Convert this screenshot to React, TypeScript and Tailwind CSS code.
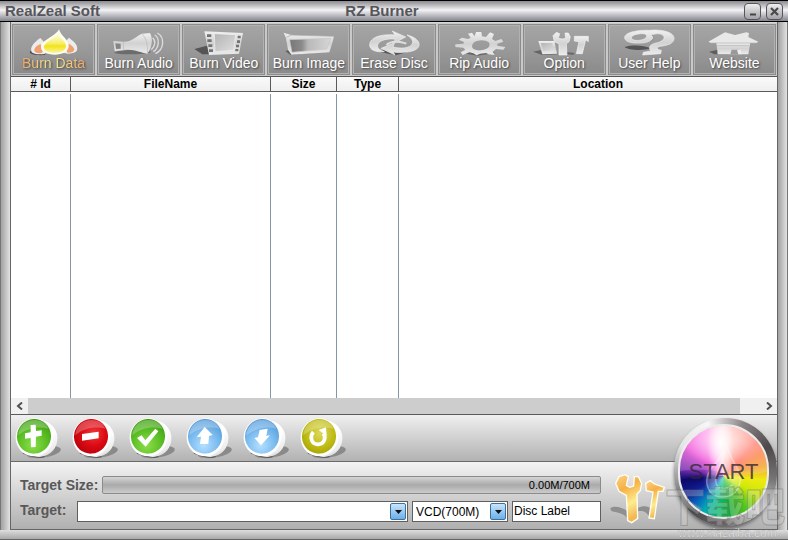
import { useState } from "react";
import type { ReactNode } from "react";

const COLUMNS = [
  { label: "# Id", width: "w-[60px]" },
  { label: "FileName", width: "w-[200px]" },
  { label: "Size", width: "w-[66px]" },
  { label: "Type", width: "w-[62px]" },
  { label: "Location", width: "" },
];

const TOOLS: { label: string; icon: ReactNode }[] = [
  {
    label: "Burn Data",
    icon: (
      <>
        <path d="M4 66 C-4 76 20 80 50 78 L30 56 Z" fill="#4f4f4f" />
        <path d="M8 70 C2 56 12 42 34 27 C50 42 56 58 48 74 C34 78 14 76 8 70 Z" fill="#ececec" />
        <path d="M16 66 C15 56 26 48 35 46 C42 56 44 66 38 72 C28 74 20 72 16 66 Z" fill="#f0a070" />
        <path d="M144 64 C148 50 138 40 120 26 C106 40 98 58 106 72 C118 76 140 74 144 64 Z" fill="#ececec" />
        <path d="M136 63 C136 56 128 48 119 44 C112 54 110 64 116 71 C126 72 134 68 136 63 Z" fill="#f0a070" />
        <path d="M90 1 C96 22 120 32 119 52 C118 70 98 77 78 77 C54 77 36 68 36 54 C38 32 78 24 90 1 Z" fill="#fffdf0" />
        <path d="M88 12 C92 30 112 36 111 52 C110 66 94 72 78 72 C60 72 44 65 44 54 C48 36 76 30 88 12 Z" fill="url(#flame)" />
      </>
    ),
  },
  {
    label: "Burn Audio",
    icon: (
      <>
        <path d="M0 72 C20 60 70 62 112 68 C96 78 20 78 0 72 Z" fill="#6c6c6c" />
        <path d="M-2 36 L28 38 C50 40 66 22 84 14 L108 12 C118 30 114 56 100 74 C78 72 58 58 28 64 L2 66 Z" fill="url(#metal)" />
        <path d="M4 43 L20 44 L20 59 L6 60 Z" fill="#858585" />
        <path d="M28 38 L29 64 M84 14 C98 30 102 50 100 74" fill="none" stroke="#b6b6b6" strokeWidth="2" />
        <path d="M116 26 C126 34 124 52 112 62 M122 18 C138 28 136 56 118 68 M130 12 C154 26 150 62 124 74" fill="none" stroke="#dcdcdc" strokeWidth="4" />
      </>
    ),
  },
  {
    label: "Burn Video",
    icon: (
      <>
        <path d="M-14 60 L24 50 L46 76 L10 76 Z" fill="#555" />
        <path d="M16 7 L132 12 L120 74 L30 78 Z" fill="url(#metal)" />
        <path d="M46 14 L110 17 L104 64 L48 68 Z" fill="url(#dim)" stroke="#f2f2f2" strokeWidth="2" />
        <path d="M24 16h13v8h-13z M25 31h13v8h-13z M28 46h12v8h-12z M30 61h12v8h-12z M116 20h9v8h-9z M114 34h9v8h-9z M111 47h9v8h-9z M109 60h9v7h-9z" fill="#737373" />
      </>
    ),
  },
  {
    label: "Burn Image",
    icon: (
      <>
        <path d="M4 66 C20 60 60 70 86 72 L20 78 Z" fill="#5c5c5c" />
        <path d="M-1 11 L22 18 L150 22 L146 38 L136 70 L22 77 L12 62 L6 28 Z" fill="url(#metal)" />
        <path d="M17 32 L140 28 L128 60 L24 70 Z" fill="url(#frame)" stroke="#c6c6c6" strokeWidth="2" />
        <path d="M7 25 L22 18 L150 22" fill="none" stroke="#aaa" strokeWidth="2" />
      </>
    ),
  },
  {
    label: "Erase Disc",
    icon: (
      <>
        <path d="M30 68 C60 56 90 58 112 70 L80 79 Z" fill="#555" />
        <path d="M2 48 C2 26 34 14 78 18 L70 6 L110 24 L76 42 L78 30 C48 28 28 36 26 48 C24 58 34 64 46 68 C22 70 2 64 2 48 Z" fill="url(#metal)" stroke="#f0f0f0" strokeWidth="2" />
        <path d="M114 18 C156 28 164 58 126 67 C108 71 84 72 72 68 L78 78 L36 58 L76 42 L72 54 C94 60 124 58 130 44 C134 34 126 26 114 18 Z" fill="url(#metal)" stroke="#f0f0f0" strokeWidth="2" />
        <path d="M52 48 C66 36 92 36 112 44" fill="none" stroke="#dedede" strokeWidth="6" />
      </>
    ),
  },
  {
    label: "Rip Audio",
    icon: (
      <>
        <path d="M24 72 C60 60 100 64 124 72 L70 80 Z" fill="#666" />
        <path
          fillRule="evenodd"
          d="M62 22 L66 9 L82 9 L84 22 L96 24 L108 10 L120 15 L114 30 L124 36 L142 30 L148 38 L130 44 L130 50 L154 54 L148 62 L126 60 L116 68 L122 78 L104 76 L96 72 L78 74 L68 79 L58 73 L46 70 L26 78 L20 70 L34 62 L28 56 L4 54 L4 46 L28 44 L30 39 L14 32 L24 26 L42 30 L50 26 L42 14 L54 11 Z M58 42 C48 56 58 64 78 64 C102 63 112 50 104 40 C94 31 68 32 58 42 Z"
          fill="url(#metal)"
        />
      </>
    ),
  },
  {
    label: "Option",
    icon: (
      <>
        <path d="M-18 68 L20 60 L58 76 L10 78 Z M74 68 L106 72 L104 77 L84 76 Z" fill="#666" />
        <path d="M-2 36 L46 36 L54 74 L10 76 Z" fill="url(#metal)" />
        <path d="M5 42 L40 42 L45 64 L13 65 Z" fill="url(#dim)" />
        <path d="M42 20 L52 10 L62 14 L58 28 L70 30 L80 28 L78 12 L88 12 L94 24 L90 38 L82 44 L84 78 L60 78 L60 44 L46 38 Z" fill="url(#metal)" stroke="#f3f3f3" strokeWidth="2" />
        <path d="M106 22 L148 22 L148 38 L140 32 L130 74 L112 74 L120 38 L106 36 Z" fill="url(#metal)" stroke="#f3f3f3" strokeWidth="2" />
      </>
    ),
  },
  {
    label: "User Help",
    icon: (
      <>
        <path d="M2 54 C30 46 60 50 82 58 C58 66 12 64 2 54 Z" fill="#555" />
        <path
          fillRule="evenodd"
          d="M78 4 C120 0 152 12 150 30 C148 46 124 50 108 52 C94 56 100 62 112 64 L110 74 L56 78 L58 70 L80 66 C72 52 80 46 96 42 C118 38 126 26 116 18 C108 12 92 14 84 18 C92 28 78 42 48 42 C18 44 0 36 2 24 C4 12 34 2 78 4 Z M58 14 C30 14 18 22 24 30 C32 38 60 34 66 26 C70 20 68 15 58 14 Z"
          fill="url(#metal)"
          stroke="#ededed"
          strokeWidth="2"
        />
        <path d="M84 18 C94 24 92 34 80 38" fill="none" stroke="#9a9a9a" strokeWidth="4" />
      </>
    ),
  },
  {
    label: "Website",
    icon: (
      <>
        <path d="M0 68 L26 62 L60 76 L16 76 Z" fill="#5e5e5e" />
        <path d="M22 40 L124 40 L118 76 L26 76 Z" fill="url(#metal)" />
        <path d="M-2 38 L48 10 L78 18 L112 10 L120 12 L118 24 L148 38 L142 42 L6 42 Z" fill="#e8e8e8" />
        <path d="M6 42 L142 42 M22 50 L120 50" stroke="#b3b3b3" strokeWidth="2" />
        <path d="M68 62 L88 62 L92 76 L64 76 Z" fill="#999" />
        <path d="M84 64 L94 62 L98 76 L88 76 Z" fill="#eee" />
      </>
    ),
  },
];

const ACTIONS: { label: string; fill: string; icon: ReactNode }[] = [
  {
    label: "Add",
    fill: "url(#green)",
    icon: <path d="M53 27 L68 26 L69 45 L86 43 L86 59 L69 62 L68 93 L54 94 L53 66 L36 68 L36 52 L53 49 Z" />,
  },
  { label: "Remove", fill: "url(#red)", icon: <path d="M36 54 L86 47 L86 67 L36 74 Z" /> },
  {
    label: "Check all",
    fill: "url(#green)",
    icon: <path d="M30 66 L44 58 L55 73 L85 38 L94 46 L56 92 Z" />,
  },
  {
    label: "Move up",
    fill: "url(#blue)",
    icon: <path d="M62 33 L86 57 L75 60 L73 84 L48 84 L51 62 L38 64 Z" />,
  },
  {
    label: "Move down",
    fill: "url(#blue)",
    icon: <path d="M56 42 L80 38 L76 60 L87 58 L60 88 L40 66 L51 64 Z" />,
  },
  {
    label: "Reset",
    fill: "url(#olive)",
    icon: (
      <>
        <path d="M46 48 C34 62 40 84 58 85 C78 86 86 66 76 52" fill="none" stroke="#fff" strokeWidth="11" />
        <path d="M62 42 L84 34 L86 60 Z" />
      </>
    ),
  },
];

function SharedGradients() {
  return (
    <svg className="absolute h-0 w-0" aria-hidden="true">
      <defs>
        <linearGradient id="metal" x1="0" y1="0" x2="0" y2="1">
          <stop offset="0" stopColor="#f0f0f0" />
          <stop offset="0.5" stopColor="#d2d2d2" />
          <stop offset="1" stopColor="#ebebeb" />
        </linearGradient>
        <linearGradient id="dim" x1="0" y1="0" x2="1" y2="1">
          <stop offset="0" stopColor="#b4b4b4" />
          <stop offset="1" stopColor="#dedede" />
        </linearGradient>
        <linearGradient id="frame" x1="0" y1="0" x2="1" y2="0">
          <stop offset="0" stopColor="#777" />
          <stop offset="0.3" stopColor="#8b8b8b" />
          <stop offset="0.45" stopColor="#b9b9b9" />
          <stop offset="1" stopColor="#d6d6d6" />
        </linearGradient>
        <linearGradient id="flame" x1="0" y1="0" x2="0" y2="1">
          <stop offset="0" stopColor="#fffef0" />
          <stop offset="0.5" stopColor="#f8f070" />
          <stop offset="0.65" stopColor="#f2e21c" />
          <stop offset="1" stopColor="#fbf6a0" />
        </linearGradient>
        <radialGradient id="green" cx="0.55" cy="0.75" r="0.75">
          <stop offset="0" stopColor="#8ede4a" />
          <stop offset="0.6" stopColor="#58bd22" />
          <stop offset="1" stopColor="#3f9c14" />
        </radialGradient>
        <radialGradient id="red" cx="0.55" cy="0.4" r="0.7">
          <stop offset="0" stopColor="#ee3a3a" />
          <stop offset="0.5" stopColor="#dc0a14" />
          <stop offset="1" stopColor="#b00008" />
        </radialGradient>
        <radialGradient id="blue" cx="0.55" cy="0.75" r="0.8">
          <stop offset="0" stopColor="#b5e0ff" />
          <stop offset="0.5" stopColor="#7dbdf0" />
          <stop offset="1" stopColor="#4e93d2" />
        </radialGradient>
        <radialGradient id="olive" cx="0.5" cy="0.4" r="0.7">
          <stop offset="0" stopColor="#dcd95c" />
          <stop offset="0.6" stopColor="#bdbb12" />
          <stop offset="1" stopColor="#a09c00" />
        </radialGradient>
        <linearGradient id="rim" x1="0" y1="0" x2="1" y2="1">
          <stop offset="0.5" stopColor="#fff" />
          <stop offset="0.8" stopColor="#ececec" />
          <stop offset="1" stopColor="#aaa" />
        </linearGradient>
        <linearGradient id="gold" x1="0" y1="0" x2="0.3" y2="1">
          <stop offset="0" stopColor="#fbd58c" />
          <stop offset="0.35" stopColor="#f6b044" />
          <stop offset="0.7" stopColor="#fdec90" />
          <stop offset="1" stopColor="#f3b850" />
        </linearGradient>
      </defs>
    </svg>
  );
}

function TitleBar() {
  const button =
    "flex size-[17px] items-center justify-center rounded-[4px] border border-[#55555a] bg-linear-to-b from-[#eee] to-[#a4a4a8]";

  return (
    <header className="grid h-[22px] shrink-0 grid-cols-[1fr_auto_1fr] items-center border-y border-black bg-linear-to-b from-[#8b8b90] via-[#f4f4f6] via-45% to-[#85858e] pr-[5px] pl-[5px] text-[15px] leading-5 font-bold text-[#56565a]">
      <span>RealZeal Soft</span>
      <h1 className="pr-6">RZ Burner</h1>
      <div className="flex justify-end gap-[5px]">
        <button aria-label="Minimize" className={button}>
          <svg viewBox="0 0 15 15" className="size-[15px]">
            <path d="M5 10.5h6" stroke="#444" strokeWidth="2" />
          </svg>
        </button>
        <button aria-label="Close" className={button}>
          <svg viewBox="0 0 15 15" className="size-[15px]">
            <path d="M4 4l7 7M11 4l-7 7" stroke="#4a4a4a" strokeWidth="2.2" />
          </svg>
        </button>
      </div>
    </header>
  );
}

function Toolbar({ active, onSelect }: { active: string; onSelect: (label: string) => void }) {
  return (
    <nav className="flex h-[55px] shrink-0 border-b border-[#555] bg-[#d8d8d8] pt-px">
      {TOOLS.map(({ label, icon }) => (
        <button
          key={label}
          onClick={() => onSelect(label)}
          className="flex-1 border border-[#c9c9c9] bg-[#8c8c8c] p-px"
        >
          <span className="flex h-full flex-col items-center border border-[#b2b2b2] bg-linear-to-b from-[#a5a5a5] via-[#999] to-[#8b8b8b] pt-[3px] whitespace-nowrap">
            <svg viewBox="0 0 150 81" className="h-[27px] w-[50px] shrink-0 overflow-visible" aria-hidden="true">
              {icon}
            </svg>
            <span
              className={
                active === label
                  ? "bg-linear-to-r from-[#f0a468] via-[#f8f08c] to-[#f0a468] bg-clip-text text-sm leading-[14px] text-transparent drop-shadow-[1px_1px_1px_#444]"
                  : "text-sm leading-[14px] text-white [text-shadow:1px_1px_2px_#444]"
              }
            >
              {label}
            </span>
          </span>
        </button>
      ))}
    </nav>
  );
}

function FileTable() {
  return (
    <div className="min-h-0 flex-1 bg-white">
      <table className="h-full w-full table-fixed border-separate border-spacing-0">
        <thead>
          <tr>
            {COLUMNS.map((column) => (
              <th
                key={column.label}
                className={`${column.width} h-[15px] border-r border-b border-[#5a5a5a] bg-linear-to-b from-[#fafafa] to-[#efefef] p-0 text-xs leading-[14px] font-bold last:border-r-0 last:pl-5`}
              >
                {column.label}
              </th>
            ))}
          </tr>
        </thead>
        <tbody>
          <tr className="h-0.5">
            <td colSpan={5} className="p-0" />
          </tr>
          <tr>
            {COLUMNS.map((column) => (
              <td key={column.label} className="border-r border-[#8497a8] p-0 last:border-r-0" />
            ))}
          </tr>
        </tbody>
      </table>
    </div>
  );
}

function ScrollBar() {
  const arrow = "flex w-[17px] items-center justify-center bg-[#f0f0f0]";

  return (
    <div className="flex h-[17px] shrink-0 border-b border-[#5a5a5a] bg-[#f0f0f0]">
      <button aria-label="Scroll left" className={arrow}>
        <svg viewBox="0 0 8 8" className="size-2">
          <path d="M6 0.5L2 4l4 3.5" fill="none" stroke="#505050" strokeWidth="2" />
        </svg>
      </button>
      <div className="mr-5 flex-1 bg-[#cdcdcd]" />
      <button aria-label="Scroll right" className={arrow}>
        <svg viewBox="0 0 8 8" className="size-2">
          <path d="M2 0.5L6 4 2 7.5" fill="none" stroke="#505050" strokeWidth="2" />
        </svg>
      </button>
    </div>
  );
}

function ActionBar() {
  return (
    <div className="flex h-[47px] shrink-0 gap-[9px] border-b border-[#6a6a6a] bg-linear-to-b from-[#f0f0f0] to-[#b2b2b2] pt-px pl-0.5">
      {ACTIONS.map(({ label, fill, icon }) => (
        <button key={label} aria-label={label} className="h-11 w-12">
          <svg viewBox="0 0 144 132" className="h-11 w-12">
            <ellipse cx="92" cy="108" rx="52" ry="17" fill="#8a8a8a" transform="rotate(-9 92 108)" />
            <path d="M28 112 C44 120 80 130 96 122 L70 104 Z" fill="#4c4c4c" />
            <ellipse cx="80" cy="68" rx="53" ry="55" fill="url(#rim)" transform="rotate(18 80 68)" />
            <ellipse cx="64" cy="64" rx="56" ry="57" fill="#fff" transform="rotate(20 64 64)" />
            <ellipse cx="63" cy="61" rx="51" ry="52" fill={fill} transform="rotate(20 63 61)" />
            <path d="M16 58 C18 28 40 12 64 12 C84 12 100 22 106 38 C76 30 42 36 16 58 Z" fill="#fff" opacity="0.25" />
            <g fill="#fff">{icon}</g>
          </svg>
        </button>
      ))}
    </div>
  );
}

function DropArrow() {
  return (
    <span className="pointer-events-none absolute top-0.5 right-0.5 flex h-[17px] w-4 items-center justify-center rounded-[2px] border border-[#3f7196] bg-linear-to-b from-[#c9e5fb] to-[#6aaeea]">
      <svg viewBox="0 0 7 4" className="h-1 w-[7px]">
        <path d="M0 0h7L3.5 4z" fill="#111" />
      </svg>
    </span>
  );
}

function TargetPanel() {
  const field = "h-[21px] border border-[#5f5f5f] bg-white text-xs text-black";

  return (
    <div className="flex h-[67px] shrink-0 bg-linear-to-b from-[#f4f4f4] to-[#b0b0b0] pl-[9px] text-sm font-bold text-[#585858]">
      <div className="flex flex-1 flex-col gap-[7px] pt-3.5">
        <div className="flex items-center">
          <span id="size-label" className="w-[82px] leading-4">
            Target Size:
          </span>
          <div
            role="progressbar"
            aria-labelledby="size-label"
            aria-valuenow={0}
            aria-valuemax={700}
            className="h-[18px] flex-1 rounded-[2px] border border-[#8b8b8b] bg-linear-to-b from-[#d6d6d6] via-[#aaa] to-[#cbcbcb] pr-2.5 text-right text-[11px] leading-4 font-normal text-black"
          >
            0.00M/700M
          </div>
        </div>
        <div className="flex gap-1">
          <label htmlFor="target" className="w-[53px] leading-[18px]">
            Target:
          </label>
          <div className="relative flex-1">
            <select id="target" className={`${field} block w-full appearance-none px-1`} />
            <DropArrow />
          </div>
          <div className="relative w-24">
            <select aria-label="Disc type" className={`${field} block w-full appearance-none pl-[3px] font-normal`}>
              <option>VCD(700M)</option>
            </select>
            <DropArrow />
          </div>
          <input
            aria-label="Disc label"
            defaultValue="Disc Label"
            className={`${field} w-[89px] px-px pb-0.5 font-normal`}
          />
        </div>
      </div>
      <button aria-label="Settings" className="mt-2.5 mr-[110px] ml-2 h-[52px] w-[58px]">
        <svg viewBox="0 0 174 156" className="h-[52px] w-[58px]">
          <path d="M4 108 C20 98 44 108 58 120 L56 140 C46 122 20 122 6 116 Z M86 108 C106 98 120 104 130 112 L120 134 C112 118 100 116 88 118 Z" fill="#8f8f8f" />
          <path d="M20 34 L30 14 L48 8 L58 14 L52 40 L62 46 L74 42 L76 14 L88 14 L98 34 L94 56 L84 66 L86 140 L68 152 L56 146 L52 70 L30 58 Z" fill="url(#gold)" stroke="#fffdf4" strokeWidth="4" />
          <path d="M110 34 L124 26 L136 36 L166 46 L162 58 L148 58 L136 140 L120 138 L132 60 L112 56 Z" fill="url(#gold)" stroke="#fffdf4" strokeWidth="4" />
        </svg>
      </button>
    </div>
  );
}

function StartButton() {
  return (
    <button className="absolute right-0 bottom-[3px] h-[108px] w-[103px] rounded-full bg-[conic-gradient(from_-20deg,#f7f7f7,#8b8486,#4f484a,#777,#d8d8d8,#6a6466,#4a4a4c,#999,#e4e4e4,#f7f7f7)] pt-1.5 pr-2 pb-[7px] pl-1 shadow-[0_3px_4px_-1px_#555]">
      <span className="relative flex size-full items-center justify-center overflow-hidden rounded-full border-2 border-[#ececec] bg-[conic-gradient(from_0deg_at_50%_55%,#ffc8c8,#ff7868_45deg,#f7a038_75deg,#eeea10_95deg,#c8e808_120deg,#50c818_145deg,#10b030_170deg,#00c070_190deg,#00b0b0_208deg,#0868c0_225deg,#101c90_245deg,#0c0868_265deg,#7830b0_280deg,#f050d8_310deg,#ff90e8_340deg,#ffc8c8)] text-[22px] text-[#332833]/80">
        <svg viewBox="0 0 90 96" preserveAspectRatio="none" className="absolute inset-0 size-full" aria-hidden="true">
          <defs>
            <radialGradient id="shine" cx="0.5" cy="0.3" r="0.5">
              <stop offset="0" stopColor="#fff" stopOpacity="0.7" />
              <stop offset="1" stopColor="#fff" stopOpacity="0.15" />
            </radialGradient>
            <radialGradient id="ray">
              <stop offset="0" stopColor="#fff" stopOpacity="0.95" />
              <stop offset="1" stopColor="#fff" stopOpacity="0" />
            </radialGradient>
          </defs>
          <path d="M0 0 H90 V48 C62 58 28 40 0 48 Z" fill="url(#shine)" />
          <ellipse cx="42" cy="18" rx="14" ry="36" fill="url(#ray)" />
          <ellipse cx="45" cy="56" rx="22" ry="20" fill="url(#ray)" opacity="0.5" />
          <path d="M48 18 C50 32 60 42 62 52 C64 66 56 75 44 75 C32 75 26 65 28 54 C30 42 46 34 48 18 Z M46 28 C44 42 36 48 37 58 C38 67 48 68 54 62" fill="#fff" fillOpacity="0.14" stroke="#fff" strokeOpacity="0.35" strokeWidth="1.5" />
        </svg>
        <span className="relative leading-6">START</span>
      </span>
    </button>
  );
}

function Watermark() {
  return (
    <svg
      viewBox="0 0 124 60"
      className="pointer-events-none absolute right-0 bottom-0 h-[60px] w-[124px] overflow-visible"
      stroke="#666"
      strokeOpacity="0.4"
      fill="#ddd"
      fillOpacity="0.3"
    >
      <text x="1" y="41" fontSize="40" fontWeight="900" fontFamily="'Noto Sans CJK SC', sans-serif">
        下载吧
      </text>
      <text
        x="14"
        y="57"
        fontSize="12"
        strokeWidth="0.5"
        fill="#f8f8f8"
        fillOpacity="0.9"
        fontFamily="'Liberation Sans', sans-serif"
      >
        www.xiazaiba.com
      </text>
    </svg>
  );
}

export default function App() {
  const [active, setActive] = useState("Burn Data");

  return (
    <div className="relative flex h-screen flex-col overflow-hidden bg-[#c4c4c4] font-['Liberation_Sans',Arial,sans-serif] text-black">
      <SharedGradients />
      <TitleBar />

      <div className="flex min-h-0 flex-1">
        <div className="w-2.5 border-l border-[#777] bg-linear-to-r from-[#a2a2a2] to-[#e2e2e2]" />
        <main className="relative flex min-w-0 flex-1 flex-col border-x border-b border-[#666]">
          <Toolbar active={active} onSelect={setActive} />
          <FileTable />
          <ScrollBar />
          <ActionBar />
          <TargetPanel />
          <StartButton />
        </main>
        <div className="w-2.5 border-r border-[#777] bg-linear-to-r from-[#a2a2a2] to-[#e2e2e2]" />
      </div>

      <div className="h-2.5 shrink-0 border-b border-[#666] bg-linear-to-b from-[#dedede] to-[#a8a8a8]" />
      <Watermark />
    </div>
  );
}
